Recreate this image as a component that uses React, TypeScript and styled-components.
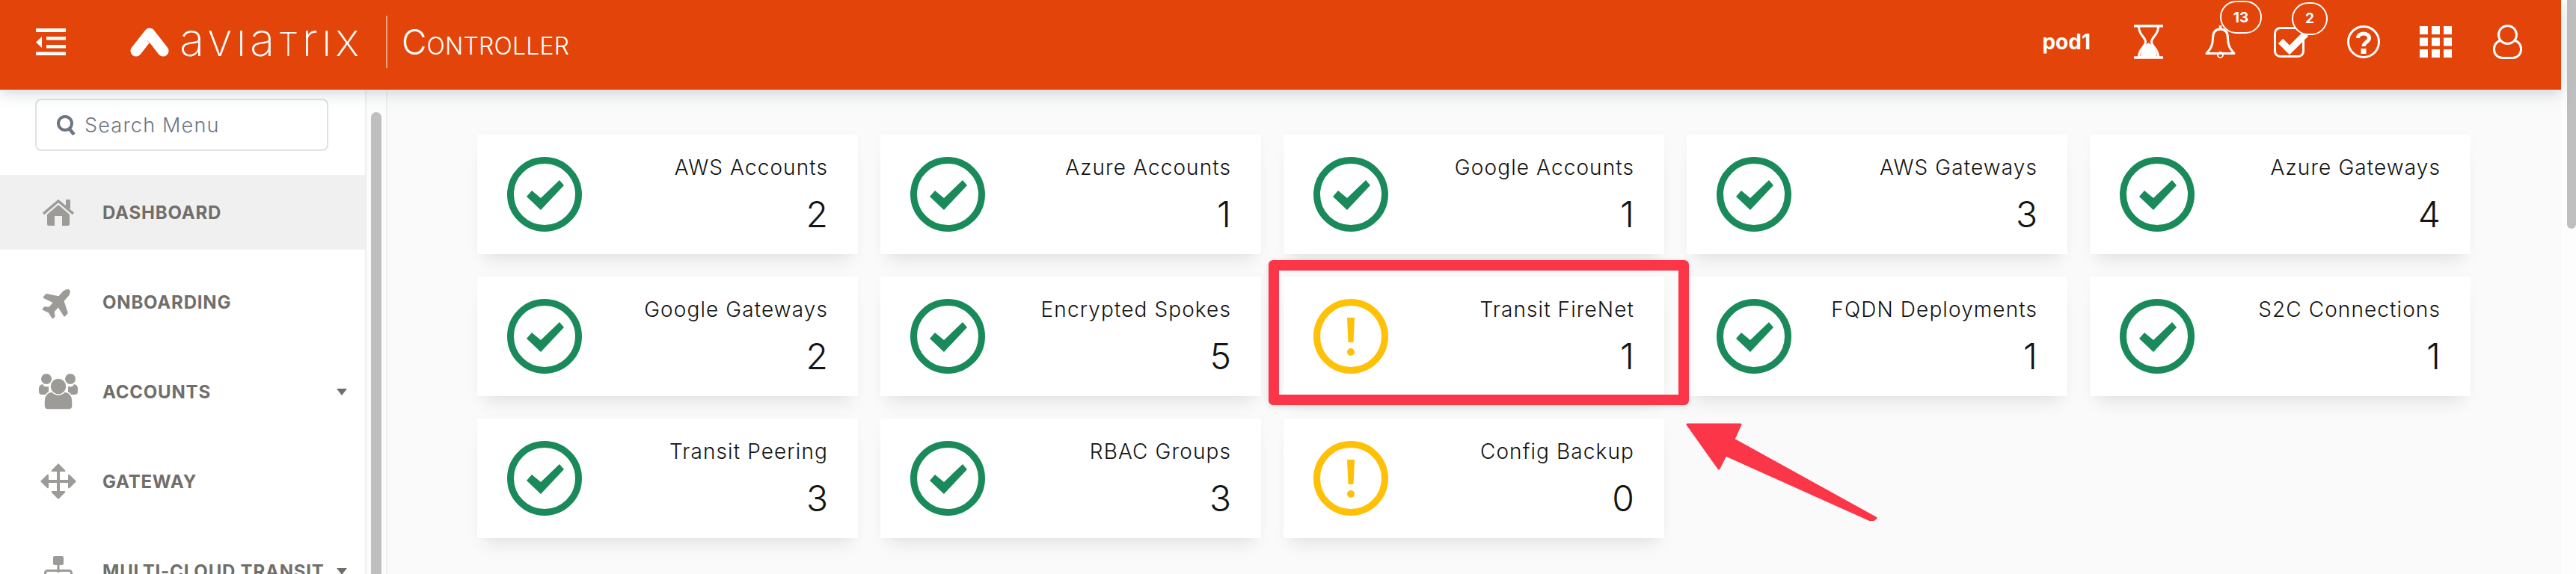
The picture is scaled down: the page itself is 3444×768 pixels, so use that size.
import React, { FC } from "react";
import styled, { createGlobalStyle } from "styled-components";
import { FaPlane } from "react-icons/fa";

interface StatusCard {
  title: string;
  value: number;
  warn?: boolean;
}

const cards: StatusCard[] = [
  { title: "AWS Accounts", value: 2 },
  { title: "Azure Accounts", value: 1 },
  { title: "Google Accounts", value: 1 },
  { title: "AWS Gateways", value: 3 },
  { title: "Azure Gateways", value: 4 },
  { title: "Google Gateways", value: 2 },
  { title: "Encrypted Spokes", value: 5 },
  { title: "Transit FireNet", value: 1, warn: true },
  { title: "FQDN Deployments", value: 1 },
  { title: "S2C Connections", value: 1 },
  { title: "Transit Peering", value: 3 },
  { title: "RBAC Groups", value: 3 },
  { title: "Config Backup", value: 0, warn: true },
];

const StatusIcon: FC<{ warn?: boolean }> = ({ warn }) => (
  <IconSvg viewBox="0 0 100 100" $warn={warn}>
    <circle cx="50" cy="50" r="45.5" fill="none" stroke="currentColor" strokeWidth="9" />
    {warn ? (
      <>
        <path d="M45 25h10l-1.5 33h-7z" fill="currentColor" />
        <circle cx="50" cy="71" r="5" fill="currentColor" />
      </>
    ) : (
      <polygon points="26,53 33,45 45,55 70,31 76,38 45,71" fill="currentColor" />
    )}
  </IconSvg>
);

const MenuIcon: FC = () => (
  <svg width="40" height="36" viewBox="0 0 40 36" fill="#fff">
    <rect x="0" y="0" width="40" height="5" />
    <rect x="14" y="11" width="26" height="4.5" />
    <rect x="14" y="22" width="26" height="4.5" />
    <rect x="0" y="31.5" width="40" height="4.5" />
    <polygon points="8,11 8,26 0,18.5" />
  </svg>
);

const Logo: FC = () => (
  <LogoWrap>
    <svg width="52" height="40" viewBox="0 0 52 40">
      <path
        d="M8 32 L26 9 L44 32"
        fill="none"
        stroke="#fff"
        strokeWidth="15"
        strokeLinecap="round"
        strokeLinejoin="round"
      />
      <path d="M23 18 L30 27" stroke="#e34409" strokeWidth="0.8" opacity="0.6" />
    </svg>
    <Wordmark>
      avıa<SmallT>T</SmallT>rıx
    </Wordmark>
    <LogoDivider />
    <ProductName>
      C<ProductRest>ONTROLLER</ProductRest>
    </ProductName>
  </LogoWrap>
);

const HourglassIcon: FC = () => (
  <svg width="39" height="46" viewBox="0 0 39 46" fill="none" stroke="#fff">
    <path d="M0 1.8h39M0 44h39" strokeWidth="3.6" />
    <path
      d="M6.5 3c0 11 9 13.5 9 20s-9 9-9 20M32.5 3c0 11-9 13.5-9 20s9 9 9 20"
      strokeWidth="3"
    />
    <path
      d="M19.5 24.5c3 1 7 5 9 10 1 2.5 2 6 2 9h-22c0-3 1-6.500 2-9 2-5 6-9 9-10z"
      fill="#fff"
      strokeWidth="0"
    />
  </svg>
);

const BellIcon: FC = () => (
  <svg width="41" height="44" viewBox="0 0 41 44" fill="none" stroke="#fff">
    <path
      d="M20.500 5c-7 0-10 5-10 12 0 10-3 14-8.500 20.500h37C33.500 31 30.500 27 30.500 17c0-7-3-12-10-12z"
      strokeWidth="3"
      strokeLinejoin="round"
    />
    <path d="M20.500 0v4" strokeWidth="3.500" />
    <circle cx="20.500" cy="39.500" r="3.500" strokeWidth="1.800" />
  </svg>
);

const CheckIcon: FC = () => (
  <svg width="41" height="41" viewBox="0 0 41 41" fill="none" stroke="#fff" overflow="visible">
    <rect x="1.500" y="1.500" width="38" height="38" rx="7" strokeWidth="3" />
    <path d="M9 19l12 12 22-22" strokeWidth="9" />
  </svg>
);

const HelpIcon: FC = () => (
  <svg width="44" height="44" viewBox="0 0 44 44" fill="none" stroke="#fff">
    <circle cx="22" cy="22" r="20.500" strokeWidth="3" />
    <path d="M14.500 17c0-8 15-8 15 0 0 5.500-7.500 5-7.500 11" strokeWidth="5" />
    <rect x="18.500" y="31" width="7" height="7" fill="#fff" strokeWidth="0" />
  </svg>
);

const GridIcon: FC = () => (
  <svg width="43" height="42" viewBox="0 0 43 42" fill="#fff">
    {[0, 16, 32].map((x) =>
      [0, 15.5, 31].map((y) => <rect key={`${x}-${y}`} x={x} y={y} width="11" height="11" />),
    )}
  </svg>
);

const UserIcon: FC = () => (
  <svg width="39" height="46" viewBox="0 0 39 46" fill="#e34409" stroke="#fff" strokeWidth="3">
    <rect x="1.500" y="21" width="36" height="23.500" rx="11" />
    <circle cx="19.500" cy="13.500" r="12" />
  </svg>
);

const SearchGlyph: FC = () => (
  <svg width="26" height="27" viewBox="0 0 26 27" fill="none" stroke="#6c7783">
    <circle cx="11" cy="11" r="9" strokeWidth="4" />
    <path d="M16.500 18l6.500 8" strokeWidth="4.500" />
  </svg>
);

const HomeIcon: FC = () => (
  <svg width="42" height="35" viewBox="0 0 42 35" fill="#9d9b98">
    <rect x="31" y="0" width="6" height="12" />
    <path d="M1 19L21 2l20 17" fill="none" stroke="#9d9b98" strokeWidth="3.500" />
    <path d="M6 20L21 7l15 13v13q0 2-2 2h-8V22H16v13H8q-2 0-2-2z" />
  </svg>
);

const AccountsIcon: FC = () => (
  <svg width="52" height="48" viewBox="0 0 52 48" fill="#9d9b98">
    <circle cx="10" cy="7" r="7" />
    <circle cx="42" cy="7" r="7" />
    <path d="M0 20q0-5 5-6 2 5 8 3v11H4q-4 0-4-4z" />
    <path d="M52 20q0-5-5-6-2 5-8 3v11h9q4 0 4-4z" />
    <path d="M7 37q0-12 11-13h16q11 1 11 13v6q0 5-5 5H12q-5 0-5-5z" stroke="#fff" strokeWidth="1.500" />
    <circle cx="26" cy="17" r="11" stroke="#fff" strokeWidth="1.500" />
  </svg>
);

const GatewayIcon: FC = () => (
  <svg width="48" height="48" viewBox="0 0 48 48" fill="#9d9b98">
    <rect x="22" y="8" width="4" height="32" />
    <rect x="8" y="22" width="32" height="4" />
    <path d="M24 0l9 9q1 2-1 2H16q-2 0-1-2zM24 48l9-9q1-2-1-2H16q-2 0-1 2zM0 24l9-9q2-1 2 1v16q0 2-2 1zM48 24l-9-9q-2-1-2 1v16q0 2 2 1z" />
  </svg>
);

const TransitIcon: FC = () => (
  <svg width="38" height="40" viewBox="0 0 38 40" fill="#9d9b98">
    <rect x="12" y="0" width="14" height="12" rx="2" />
    <rect x="17.500" y="12" width="3" height="10" />
    <rect x="1.500" y="19.500" width="35" height="20" rx="3" fill="none" stroke="#9d9b98" strokeWidth="3" />
  </svg>
);

const PlaneIcon = styled(FaPlane)`
  width: 44px;
  height: 44px;
  color: #9d9b98;
  transform: rotate(-48deg);
`;

const menu = [
  { label: "DASHBOARD", icon: <HomeIcon />, active: true },
  { label: "ONBOARDING", icon: <PlaneIcon /> },
  { label: "ACCOUNTS", icon: <AccountsIcon />, caret: true },
  { label: "GATEWAY", icon: <GatewayIcon /> },
  { label: "MULTI-CLOUD TRANSIT", icon: <TransitIcon />, caret: true },
];

const App: FC = () => (
  <Screen>
    <GlobalStyle />
    <Page>
      <Header>
        <MenuIcon />
        <Logo />
        <HeaderRight>
          <PodName>pod1</PodName>
          <HeaderIcon $left={58}>
            <HourglassIcon />
          </HeaderIcon>
          <HeaderIcon $left={56}>
            <BellIcon />
            <Badge $left={20} $width={56}>
              13
            </Badge>
          </HeaderIcon>
          <HeaderIcon $left={51}>
            <CheckIcon />
            <Badge $left={24} $width={48}>
              2
            </Badge>
          </HeaderIcon>
          <HeaderIcon $left={57}>
            <HelpIcon />
          </HeaderIcon>
          <HeaderIcon $left={53}>
            <GridIcon />
          </HeaderIcon>
          <HeaderIcon $left={55}>
            <UserIcon />
          </HeaderIcon>
        </HeaderRight>
      </Header>
      <Body>
        <Sidebar>
          <SearchBox>
            <SearchGlyph />
            <span>Search Menu</span>
          </SearchBox>
          <MenuList>
            {menu.map((item) => (
              <MenuRow key={item.label} $active={item.active}>
                <MenuIconSlot>{item.icon}</MenuIconSlot>
                <MenuLabel>{item.label}</MenuLabel>
                {item.caret && <Caret />}
              </MenuRow>
            ))}
          </MenuList>
        </Sidebar>
        <SideScroll>
          <SideThumb />
        </SideScroll>
        <Content>
          <CardGrid>
            {cards.map((card) => (
              <Card key={card.title}>
                <StatusIcon warn={card.warn} />
                <CardText>
                  <CardTitle>{card.title}</CardTitle>
                  <CardValue>{card.value}</CardValue>
                </CardText>
              </Card>
            ))}
          </CardGrid>
        </Content>
      </Body>
    </Page>
    <PageScroll>
      <PageThumb />
    </PageScroll>
    <Highlight />
    <Arrow viewBox="0 0 260 135" width="260" height="135">
      <polygon
        points="2,6 73,6 64,26 254,131 249,135 53,47 44,65"
        fill="#fa3648"
        stroke="#fa3648"
        strokeWidth="3"
        strokeLinejoin="round"
      />
    </Arrow>
  </Screen>
);

const GlobalStyle = createGlobalStyle`
  html, body {
    margin: 0;
    padding: 0;
    overflow: hidden;
    background: #fff;
    font-family: "Inter", "Liberation Sans", sans-serif;
  }
`;

const Screen = styled.div`
  position: relative;
  display: flex;
  width: 3444px;
  height: 768px;
  overflow: hidden;
`;

const Page = styled.div`
  display: flex;
  flex-direction: column;
  width: 3424px;
`;

const Header = styled.header`
  position: relative;
  z-index: 2;
  display: flex;
  align-items: center;
  flex: 0 0 120px;
  box-sizing: border-box;
  padding: 0 52px 8px 48px;
  background: #e34409;
  box-shadow: 0 6px 18px rgba(120, 135, 150, 0.3);
  color: #fff;
`;

const LogoWrap = styled.div`
  display: flex;
  align-items: center;
  margin-left: 86px;
`;

const Wordmark = styled.span`
  width: 243px;
  margin-left: 14px;
  font-size: 62px;
  font-weight: 200;
  line-height: 60px;
  letter-spacing: 4.6px;
  white-space: nowrap;
`;

const SmallT = styled.span`
  font-size: 43px;
`;

const LogoDivider = styled.span`
  width: 2px;
  height: 70px;
  margin: 0 19px 0 33px;
  background: rgba(255, 255, 255, 0.5);
`;

const ProductName = styled.span`
  font-size: 46px;
  font-weight: 300;
  white-space: nowrap;
`;

const ProductRest = styled.span`
  font-size: 32px;
  letter-spacing: 0.2px;
`;

const HeaderRight = styled.div`
  display: flex;
  align-items: center;
  margin-left: auto;
`;

const PodName = styled.span`
  font-size: 28px;
  font-weight: 700;
`;

const HeaderIcon = styled.div<{ $left: number }>`
  position: relative;
  display: flex;
  margin-left: ${({ $left }) => $left}px;
`;

const Badge = styled.span<{ $left: number; $width: number }>`
  position: absolute;
  top: -33px;
  left: ${({ $left }) => $left}px;
  display: flex;
  align-items: center;
  justify-content: center;
  box-sizing: border-box;
  width: ${({ $width }) => $width}px;
  height: 44px;
  border: 2px solid #fff;
  border-radius: 22px;
  background: #e34409;
  font-size: 19px;
  font-weight: 700;
`;

const Body = styled.div`
  display: flex;
  flex: 1;
  min-height: 0;
`;

const Sidebar = styled.aside`
  flex: 0 0 490px;
  box-sizing: border-box;
  padding-top: 12px;
  overflow: hidden;
  border-right: 2px solid #eeeeee;
  background: #fff;
`;

const SearchBox = styled.div`
  display: flex;
  align-items: center;
  gap: 11px;
  box-sizing: border-box;
  width: 392px;
  height: 70px;
  margin-left: 47px;
  padding-left: 27px;
  border: 2px solid #dfe1e3;
  border-radius: 8px;
  font-size: 27px;
  font-weight: 300;
  letter-spacing: 1.2px;
  color: #6c7783;
`;

const MenuList = styled.nav`
  display: flex;
  flex-direction: column;
  gap: 20px;
  margin-top: 32px;
`;

const MenuRow = styled.div<{ $active?: boolean }>`
  display: flex;
  align-items: center;
  flex: 0 0 100px;
  padding: 0 24px 0 48px;
  background: ${({ $active }) => ($active ? "#f0f0f0" : "transparent")};
`;

const MenuIconSlot = styled.div`
  display: flex;
  align-items: center;
  justify-content: center;
  width: 60px;
  margin-right: 29px;
`;

const MenuLabel = styled.span`
  font-size: 24px;
  font-weight: 700;
  letter-spacing: 0.8px;
  white-space: nowrap;
  color: #716e6a;
`;

const Caret = styled.span`
  margin-left: auto;
  border-top: 9px solid #716e6a;
  border-left: 7.5px solid transparent;
  border-right: 7.5px solid transparent;
`;

const SideScroll = styled.div`
  flex: 0 0 28px;
  box-sizing: border-box;
  padding: 30px 6px 0;
  border-right: 2px solid #eeeeee;
  background: #fcfcfc;
`;

const SideThumb = styled.div`
  height: 100%;
  border-radius: 8px 8px 0 0;
  background: #bfbfbf;
`;

const Content = styled.main`
  flex: 1;
  padding: 60px 0 0 120px;
  background: #fafafa;
`;

const CardGrid = styled.div`
  display: grid;
  grid-template-columns: repeat(5, 509px);
  grid-auto-rows: 160px;
  gap: 30px;
`;

const Card = styled.div`
  display: flex;
  justify-content: space-between;
  box-sizing: border-box;
  padding: 30px 40px 0;
  background: #fff;
  box-shadow: 0 18px 22px -10px rgba(0, 0, 0, 0.09), 0 0 14px rgba(0, 0, 0, 0.02);
`;

const IconSvg = styled.svg<{ $warn?: boolean }>`
  width: 100px;
  height: 100px;
  color: ${({ $warn }) => ($warn ? "#ffc107" : "#1b8a5a")};
`;

const CardText = styled.div`
  display: flex;
  flex-direction: column;
  align-items: flex-end;
  margin-top: -6px;
  color: #141414;
`;

const CardTitle = styled.span`
  font-size: 28px;
  font-weight: 300;
  line-height: 40px;
  letter-spacing: 1.1px;
`;

const CardValue = styled.span`
  margin-top: 13px;
  font-size: 48px;
  font-weight: 300;
  line-height: 60px;
`;

const PageScroll = styled.div`
  flex: 0 0 20px;
  box-sizing: border-box;
  padding-left: 8px;
  background: #fdfdfd;
`;

const PageThumb = styled.div`
  height: 306px;
  border-radius: 0 0 8px 8px;
  background: #bfbfbf;
`;

const Highlight = styled.div`
  position: absolute;
  left: 1696px;
  top: 348px;
  box-sizing: border-box;
  width: 562px;
  height: 194px;
  border: 14px solid #fa3648;
  border-radius: 6px;
  box-shadow: 0 2px 8px rgba(0, 0, 0, 0.12);
`;

const Arrow = styled.svg`
  position: absolute;
  left: 2254px;
  top: 562px;
`;

export default App;
